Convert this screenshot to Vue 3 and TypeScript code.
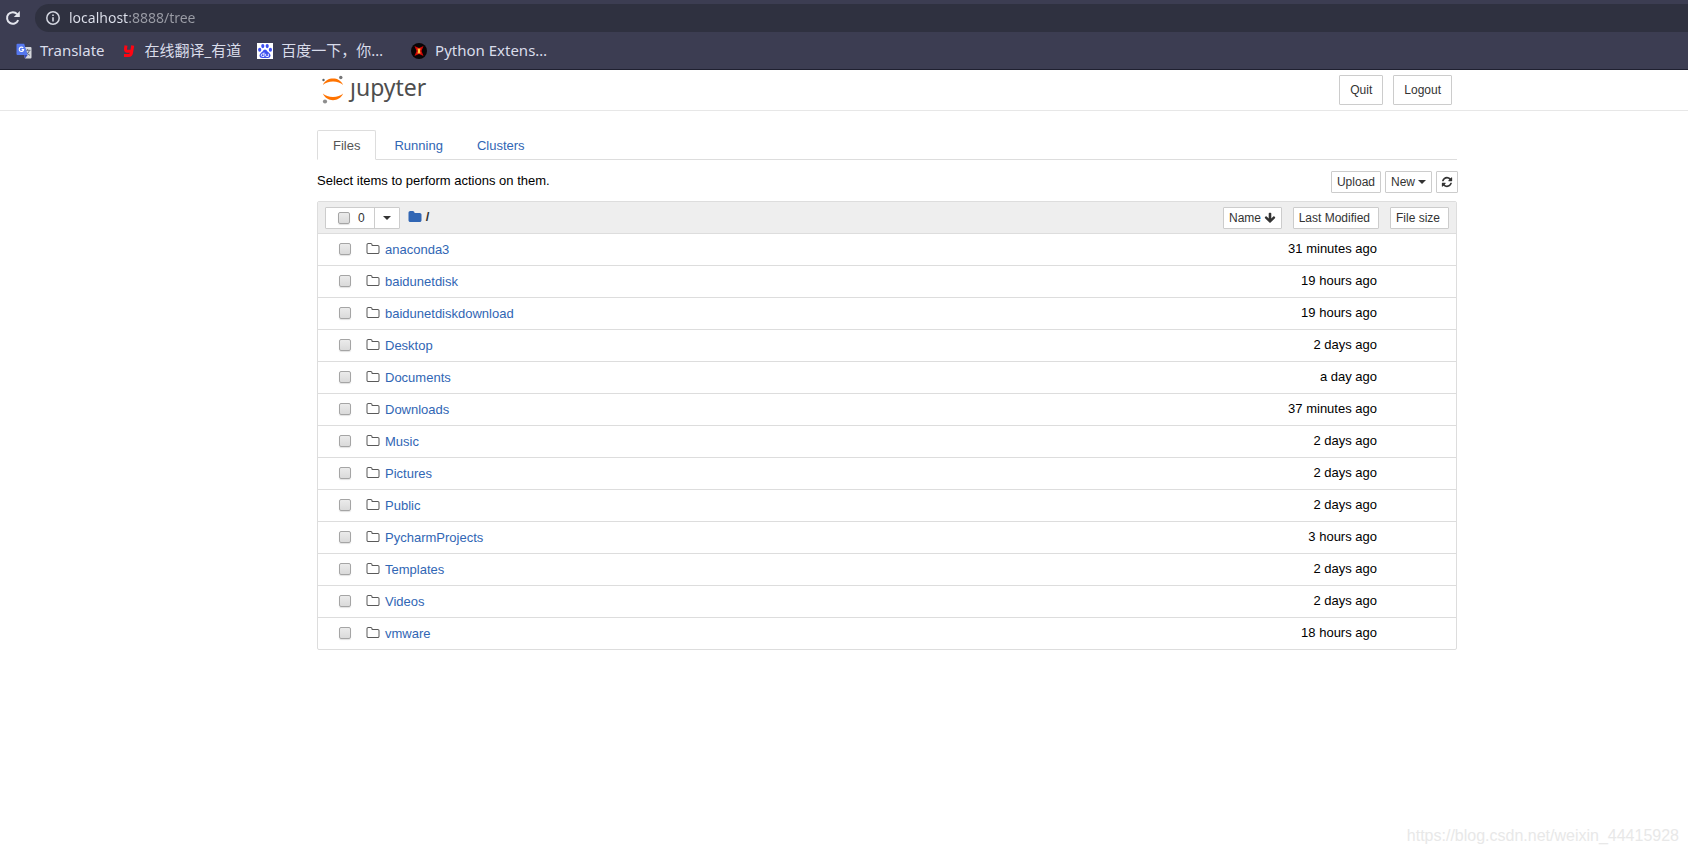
<script setup lang="ts">
import { ref } from 'vue'

interface Entry {
  name: string
  modified: string
  selected: boolean
}

const address = ref('localhost:8888/tree')
const allSelected = ref(false)

const tabs: string[] = ['Files', 'Running', 'Clusters']
const activeTab = ref('Files')

const entries = ref<Entry[]>(
  [
    ['anaconda3', '31 minutes ago'],
    ['baidunetdisk', '19 hours ago'],
    ['baidunetdiskdownload', '19 hours ago'],
    ['Desktop', '2 days ago'],
    ['Documents', 'a day ago'],
    ['Downloads', '37 minutes ago'],
    ['Music', '2 days ago'],
    ['Pictures', '2 days ago'],
    ['Public', '2 days ago'],
    ['PycharmProjects', '3 hours ago'],
    ['Templates', '2 days ago'],
    ['Videos', '2 days ago'],
    ['vmware', '18 hours ago'],
  ].map(([name, modified]) => ({ name, modified, selected: false })),
)

function toggleAll(): void {
  entries.value.forEach((e) => (e.selected = allSelected.value))
}
</script>

<template>
  <div class="page">
    <div class="chrome">
      <div class="toolbar">
        <button class="reload" type="button" aria-label="Reload">
          <svg width="16" height="16" viewBox="0 0 16 16">
            <path d="M13.2 10.2A5.8 5.8 0 1 1 12.2 4.1" fill="none" stroke="#e4e6ee" stroke-width="2" />
            <path d="M14.8 1v6H8.8z" fill="#e4e6ee" />
          </svg>
        </button>
        <div class="omnibox">
          <svg width="14" height="14" viewBox="0 0 14 14" aria-hidden="true">
            <circle cx="7" cy="7" r="6.2" fill="none" stroke="#d3d6e0" stroke-width="1.5" />
            <path d="M7 6.2v4.2M7 3.4v1.6" stroke="#d3d6e0" stroke-width="1.6" />
          </svg>
          <input v-model="address" class="address" type="text" aria-label="Address" spellcheck="false" />
        </div>
      </div>
      <nav class="bookmarks">
        <a class="bookmark" href="#translate">
          <svg width="16" height="16" viewBox="0 0 16 16" aria-hidden="true">
            <path d="M6 4h8.5q1 0 1 1v9.500q0 1-1 1H9z" fill="#d5d7dc" />
            <path d="M9 7.300h5.500M11.600 6v1.300M13.500 7.300q-.8 3-3.500 4.500M10.200 8.600q1.200 2.600 3.800 3.800" fill="none" stroke="#6d7482" />
            <path d="M1.500.8h6.700l3.500 11.200H1.500q-1 0-1-1V1.800q0-1 1-1z" fill="#5577ee" />
            <path d="M8 12h3.700L9 15.500z" fill="#3949b8" />
            <path d="M7.200 5A2.200 2.200 0 1 0 7.600 6.600H5.600" fill="none" stroke="#fff" stroke-width="1.100" />
          </svg>
          <span>Translate</span>
        </a>
        <a class="bookmark" href="#youdao">
          <svg width="16" height="16" viewBox="0 0 16 16" aria-hidden="true">
            <path d="M5 2.500L4.500 6q-.2 2.200 1.600 2.200h4.400M11.700 2.500L10.500 10q-.4 2.400-2.900 2.400H3" fill="none" stroke="#ff0512" stroke-width="3" />
          </svg>
          <span>在线翻译_有道</span>
        </a>
        <a class="bookmark" href="#baidu">
          <svg width="16" height="16" viewBox="0 0 16 16" aria-hidden="true">
            <path d="M0 0h16v16H0z" fill="#fff" />
            <g fill="#3d4ff0">
              <ellipse cx="2.700" cy="6.800" rx="1.600" ry="2" />
              <ellipse cx="5.800" cy="3.100" rx="1.600" ry="2.100" />
              <ellipse cx="10.200" cy="3.100" rx="1.600" ry="2.100" />
              <ellipse cx="13.400" cy="6.800" rx="1.600" ry="2" />
              <path d="M8 6.600q1.500 0 2.500 1.800 3.500 2.500 3 4.600-.5 2.400-3.300 2H5.800q-2.900.4-3.300-2-.4-2.100 3-4.600Q6.500 6.600 8 6.600z" />
            </g>
            <path d="M7 9.500v4H5.500q-1.300-.1-1.300-1.300t1.300-1.300H7M8.700 10.800v2q0 .7.700.7h1.900v-2.700" fill="none" stroke="#fff" stroke-width=".9" />
          </svg>
          <span>百度一下，你…</span>
        </a>
        <a class="bookmark last" href="#extensions">
          <svg width="16" height="16" viewBox="0 0 16 16" aria-hidden="true">
            <circle cx="8" cy="8" r="8" fill="#090506" />
            <path d="M3.500 3L8 5l4.500-2-2 5 2 5L8 11l-4.500 2 2-5z" fill="#d10808" />
            <path d="M6.300 5.500h3.400L9 8l.7 2.500H6.300L7 8z" fill="#ff8a1c" />
            <path d="M7.300 6.200h1.400v3.600H7.300z" fill="#ffe45a" />
          </svg>
          <span>Python Extens…</span>
        </a>
      </nav>
    </div>

    <header class="header">
      <div class="container header-inner">
        <a class="logo" href="#tree" aria-label="jupyter">
          <svg width="22" height="30" viewBox="0 0 22 30" aria-hidden="true">
            <path d="M.9 11C3 6.300 6.800 4.500 11 4.500s8 1.800 10.100 6.500C18.800 8.700 15.200 7.500 11 7.500S3.200 8.700.9 11z" fill="#ff7300" />
            <path d="M.9 19.500C3.200 21.800 6.800 23 11 23s7.800-1.200 10.100-3.500C19 24.200 15.200 26.200 11 26.200S3 24.200.9 19.500z" fill="#ff7300" />
            <circle cx="1.500" cy="6" r="1.200" fill="#616262" />
            <circle cx="18.800" cy="3.500" r="1.700" fill="#767677" />
            <circle cx="3" cy="27.500" r="2.100" fill="#8e8e8e" />
          </svg>
          <span class="wordmark">ȷupyter</span>
        </a>
        <div class="session">
          <button class="btn btn-lg" type="button">Quit</button>
          <button class="btn btn-lg" type="button">Logout</button>
        </div>
      </div>
    </header>

    <main class="container">
      <nav class="tabs">
        <a
          v-for="tab in tabs"
          :key="tab"
          class="tab"
          :class="{ active: tab === activeTab }"
          :href="'#' + tab.toLowerCase()"
          @click.prevent="activeTab = tab"
        >{{ tab }}</a>
      </nav>

      <div class="actions">
        <p class="hint">Select items to perform actions on them.</p>
        <div class="action-buttons">
          <button class="btn" type="button">Upload</button>
          <button class="btn" type="button">New <i class="caret"></i></button>
          <button class="btn btn-icon" type="button" aria-label="Refresh">
            <svg width="12" height="12" viewBox="0 0 1792 1792" fill="currentColor">
              <path d="M1639 1056q0 5-1 7-64 268-268 434.500t-478 166.500q-146 0-282.500-55t-243.500-157l-129 129q-19 19-45 19t-45-19-19-45v-448q0-26 19-45t45-19h448q26 0 45 19t19 45-19 45l-137 137q71 66 161 102t187 36q134 0 250-65t186-179q11-17 53-117 8-23 30-23h192q13 0 22.500 9.500t9.500 22.500zm25-800v448q0 26-19 45t-45 19h-448q-26 0-45-19t-19-45 19-45l138-138q-148-137-349-137-134 0-250 65t-186 179q-11 17-53 117-8 23-30 23h-199q-13 0-22.500-9.500t-9.500-22.500v-7q65-268 270-434.500t480-166.500q146 0 284 55.500t245 156.500l130-129q19-19 45-19t45 19 19 45z" />
            </svg>
          </button>
        </div>
      </div>

      <div class="listing">
        <table>
          <thead>
            <tr>
              <th class="col-name" scope="col">
                <div class="list-head">
                  <div class="select-group">
                    <label class="select-all">
                      <input v-model="allSelected" class="check" type="checkbox" aria-label="Select all" @change="toggleAll" />
                      <span>0</span>
                    </label>
                    <button class="select-menu" type="button" aria-label="Select by type"><i class="caret"></i></button>
                  </div>
                  <div class="crumbs">
                    <a class="root" href="#root" aria-label="Home folder">
                      <svg width="14" height="14" viewBox="0 0 1792 1792" fill="currentColor">
                        <path d="M1728 608v704q0 92-66 158t-158 66h-1216q-92 0-158-66t-66-158v-960q0-92 66-158t158-66h320q92 0 158 66t66 158v32h672q92 0 158 66t66 158z" />
                      </svg>
                    </a>
                    <span>/</span>
                  </div>
                  <button class="btn sort-name" type="button">
                    Name
                    <svg width="12" height="12" viewBox="0 0 1792 1792" fill="currentColor" aria-hidden="true">
                      <path d="M1675 832q0 53-37 90l-651 652q-39 37-91 37-53 0-90-37l-651-652q-38-36-38-90 0-53 38-91l74-75q39-37 91-37 53 0 90 37l294 294v-704q0-52 38-90t90-38h128q52 0 90 38t38 90v704l294-294q37-37 90-37 52 0 91 37l75 75q37 39 37 91z" />
                    </svg>
                  </button>
                </div>
              </th>
              <th class="col-modified" scope="col"><button class="btn sort" type="button">Last Modified</button></th>
              <th class="col-size" scope="col"><button class="btn sort" type="button">File size</button></th>
            </tr>
          </thead>
          <tbody>
            <tr v-for="entry in entries" :key="entry.name">
              <td>
                <div class="item">
                  <input v-model="entry.selected" class="check" type="checkbox" :aria-label="'Select ' + entry.name" />
                  <svg width="14" height="14" viewBox="0 0 1792 1792" fill="#5a5a5a" aria-hidden="true">
                    <path d="M1600 1312v-704q0-40-28-68t-68-28h-704q-40 0-68-28t-28-68v-64q0-40-28-68t-68-28h-320q-40 0-68 28t-28 68v960q0 40 28 68t68 28h1216q40 0 68-28t28-68zm128-704v704q0 92-66 158t-158 66h-1216q-92 0-158-66t-66-158v-960q0-92 66-158t158-66h320q92 0 158 66t66 158v32h672q92 0 158 66t66 158z" />
                  </svg>
                  <a :href="'#' + entry.name">{{ entry.name }}</a>
                </div>
              </td>
              <td class="modified">{{ entry.modified }}</td>
              <td></td>
            </tr>
          </tbody>
        </table>
      </div>
    </main>

    <footer class="watermark">https://blog.csdn.net/weixin_44415928</footer>
  </div>
</template>

<style>
body {
  margin: 0;
  background: #fff;
}
</style>

<style scoped>
.page {
  display: flex;
  flex-direction: column;
  min-height: 100vh;
  color: #000;
  font: 13px/20px "Liberation Sans", Arial, "Noto Sans CJK SC", sans-serif;
}

.page *,
.page {
  box-sizing: border-box;
}

a {
  color: #3166b4;
  text-decoration: none;
}

svg {
  display: block;
  flex: none;
}

/* Browser chrome */
.chrome {
  background: #3c3d52;
  border-bottom: 1px solid #1f2030;
  font-family: "Noto Sans", "Noto Sans CJK SC", sans-serif;
}

.toolbar {
  display: flex;
  align-items: center;
  gap: 14px;
  padding: 4px 0 0 5px;
}

.reload {
  padding: 0;
  border: 0;
  background: none;
}

.omnibox {
  display: flex;
  flex: 1;
  align-items: center;
  gap: 9px;
  height: 28px;
  padding-left: 11px;
  border-radius: 14px 0 0 14px;
  background: #2f3140;
}

.address {
  flex: 1;
  min-width: 0;
  padding: 0;
  border: 0;
  outline: 0;
  background: linear-gradient(90deg, #e0e3ee 59px, #9b9da6 59px);
  background-clip: text;
  -webkit-background-clip: text;
  -webkit-text-fill-color: transparent;
  font: 14px/20px "Noto Sans", sans-serif;
}

.bookmarks {
  display: flex;
  align-items: center;
  gap: 16px;
  height: 37px;
  padding-left: 16px;
}

.bookmark {
  display: flex;
  align-items: center;
  gap: 8px;
  color: #d9dcea;
  font-size: 15px;
  white-space: nowrap;
}

.bookmark span {
  padding-bottom: 2px;
}

.bookmark.last {
  margin-left: 12px;
}

/* Page header */
.header,
main {
  padding-left: 86px;
}

.header {
  border-bottom: 1px solid #e7e7e7;
}

.container {
  width: 100%;
  max-width: 1140px;
  margin: 0 auto;
}

main.container {
  max-width: 1226px;
}

.header-inner {
  display: flex;
  align-items: center;
  justify-content: space-between;
  height: 40px;
  padding: 0 5px;
}

.logo {
  display: flex;
  align-items: flex-start;
  gap: 6px;
  padding-bottom: 2px;
}

.wordmark {
  color: #4e4e4e;
  font: 23px/26px "Noto Sans", sans-serif;
}

.session {
  display: flex;
  gap: 10px;
}

.btn {
  display: inline-flex;
  align-items: center;
  gap: 3px;
  height: 22px;
  padding: 0 5px;
  border: 1px solid #ccc;
  border-radius: 1px;
  background: #fff;
  color: #333;
  font: 12px/18px "Liberation Sans", Arial, sans-serif;
  white-space: nowrap;
}

.btn-lg {
  height: 30px;
  padding: 0 10px;
}

.btn-icon {
  padding: 0 4px;
}

.caret {
  width: 0;
  height: 0;
  border-top: 4px solid #333;
  border-right: 4px solid transparent;
  border-left: 4px solid transparent;
}

/* Tabs */
.tabs {
  display: flex;
  gap: 2px;
  margin-top: 19px;
  border-bottom: 1px solid #ddd;
}

.tab {
  margin-bottom: -1px;
  padding: 5px 15px 3px;
  border: 1px solid transparent;
  border-radius: 2px 2px 0 0;
}

.tab.active {
  border-color: #ddd #ddd #fff;
  background: #fff;
  color: #555;
}

.actions {
  display: flex;
  align-items: center;
  justify-content: space-between;
  height: 41px;
}

.hint {
  margin: 0;
}

.action-buttons {
  display: flex;
  gap: 4px;
  margin-right: -1px;
  padding-top: 2px;
}

/* File list */
.listing {
  border: 1px solid #ddd;
  border-radius: 2px;
  overflow: hidden;
}

table {
  width: 100%;
  border-spacing: 0;
  table-layout: fixed;
}

th {
  height: 31px;
  padding: 0;
  background: #eee;
  font-weight: normal;
  text-align: left;
}

td {
  height: 32px;
  padding: 0;
  border-top: 1px solid #ddd;
}

.col-modified {
  width: 97px;
  text-align: right;
}

.col-size {
  width: 77px;
  padding-left: 11px;
}

.sort {
  padding-right: 8px;
}

.sort-name {
  margin-left: auto;
}

th .btn {
  vertical-align: middle;
}

.list-head {
  display: flex;
  align-items: center;
  padding-left: 7px;
}

.select-group {
  display: flex;
  height: 22px;
  border: 1px solid #ccc;
  border-radius: 1px;
  background: #fff;
  color: #333;
  font-size: 12px;
}

.select-all {
  display: flex;
  align-items: center;
  gap: 8px;
  padding: 0 9px 0 12px;
}

.select-menu {
  display: flex;
  align-items: center;
  padding: 0 8px;
  border: 0;
  border-left: 1px solid #ccc;
  background: none;
}

.check {
  appearance: none;
  width: 12px;
  height: 12px;
  margin: 0;
  border: 1px solid #a5a5a5;
  border-radius: 2px;
  background: linear-gradient(#ebebeb, #dadada);
  box-shadow: 0 1px 1px #e2e2e2;
}

.check:checked {
  background: #296eaa;
}

.crumbs {
  display: flex;
  align-items: center;
  gap: 4px;
  margin-left: 8px;
  padding-bottom: 2px;
  color: #333;
  font-weight: bold;
}

.item {
  display: flex;
  align-items: center;
  padding-left: 21px;
}

.item .check {
  margin-bottom: 1px;
}

.item svg {
  margin: 0 5px 2px 15px;
}

.modified {
  padding: 0 2px 2px 0;
  text-align: right;
  white-space: nowrap;
}

.watermark {
  margin-top: auto;
  padding: 0 9px 8px;
  color: #e8e8e8;
  font-size: 16px;
  text-align: right;
}
</style>
